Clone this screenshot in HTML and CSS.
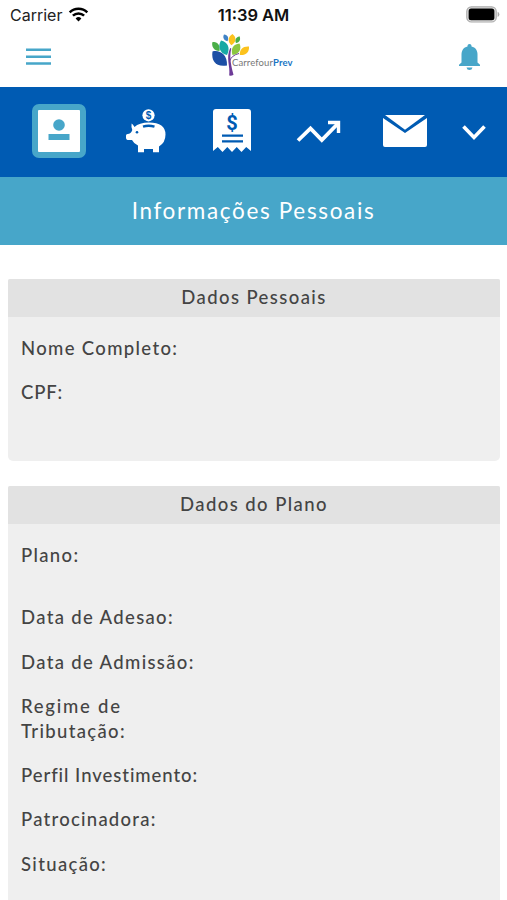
FILE: index.html
```html
<!DOCTYPE html>
<html lang="pt-BR">
<head>
<meta charset="utf-8">
<title>Informações Pessoais</title>
<link rel="stylesheet" href="styles.css">
</head>
<body>
<div class="status">
  <div class="carrier"><span>Carrier</span>
    <svg width="21" height="15" viewBox="0 0 21 15"><path d="M10.5 14.5 7.6 11.4a4.1 4.1 0 0 1 5.8 0z"/><path d="M4.9 8.7a8 8 0 0 1 11.2 0M1.7 5.3a12.8 12.8 0 0 1 17.6 0" fill="none" stroke="#000" stroke-width="2.5"/></svg>
  </div>
  <div class="time">11:39 AM</div>
  <svg class="battery" width="34" height="17" viewBox="0 0 34 17"><rect x=".8" y=".8" width="29.4" height="15.2" rx="4.6" fill="#e4e4e4" stroke="#aaa" stroke-width="1.2"/><rect x="2.6" y="2.6" width="25.8" height="11.6" rx="2.5" fill="#000"/><path d="M31.6 5.8q1.8.9 1.8 2.6t-1.8 2.6z" fill="#aaa"/></svg>
</div>
<header class="appbar">
  <svg class="menu" width="25" height="18" viewBox="0 0 25 18"><path d="M0 1.8h25M0 8.8h25M0 15.5h25" stroke="#47a6c9" stroke-width="2.6"/></svg>
  <div class="logo">
    <svg width="40" height="43" viewBox="0 0 40 43">
      <path d="M17.200 41.500C18.500 32 13.500 24 18.200 14L19.300 14.500C17 24 19.500 33 21.500 40.800q-2 1.200-4.300.7z" fill="#6d3a97"/>
      <path d="M17.500 27Q20 21 27 19.500" fill="none" stroke="#6d3a97" stroke-width="1"/>
      <path d="M.5 17.500C7 15.500 15.500 20 15 31.500 4 33.500-1 27 .5 17.500z" fill="#1c4fa5"/>
      <path d="M.3 8.300C5 7 8.500 11 7.500 17 2 17-.5 13 .3 8.300z" fill="#4aae48"/>
      <path d="M9 6.500C16 8 18.500 14 15 21 7.500 19.500 5.500 12 9 6.500z" fill="#16a9a4"/>
      <path d="M12 .5C16 1 17 4 15.500 7.200 11.500 6.500 10.500 3 12 .5z" fill="#3f82c6"/>
      <path d="M20.500 0C25 3.500 24 8.500 19.500 11.200 15.500 8 15.500 3 20.500 0z" fill="#fcc21d"/>
      <path d="M27.500 2.200C29 5.500 27.500 8.500 24 9 22.500 6 24 3 27.500 2.200z" fill="#4aae48"/>
      <path d="M27.500 9.500C30 15 27 20.500 20.500 21 18.500 15 21 10 27.500 9.500z" fill="#8bc63f"/>
      <path d="M37 12.500C37.500 18 34 21.500 27.800 21 27.500 15.500 31 12 37 12.500z" fill="#fcc21d"/>
    </svg>
    <div class="brand">Carrefour<b>Prev</b></div>
  </div>
  <svg class="bell" width="21" height="27" viewBox="0 0 21 27"><path d="M10.500 0c1.200 0 2 .9 2 2v.4c4 .9 6 4 6 8v8l2.500 2.400V22H0v-1.200l2.500-2.400v-8c0-4 2-7.100 6-8V2c0-1.100.8-2 2-2zM7.500 23.500h6q-.5 2.500-3 2.500t-3-2.500z" fill="#47a6c9"/></svg>
</header>
<nav class="tabs">
  <div class="profile"><svg width="44" height="42" viewBox="0 0 44 42"><circle cx="22" cy="15" r="5.800" fill="#47a6c9"/><path d="M11.500 24H32.500v6H11.500z" fill="#47a6c9"/></svg></div>
  <svg class="pig" width="40" height="44" viewBox="0 0 40 44"><circle cx="22.500" cy="6.300" r="6.100" fill="#fff"/><text x="22.500" y="9.900" class="coin">$</text><path d="M8.500 18Q7 15 5.600 14.500q-.6 3 .7 6.500Q5 25 1.500 25 0 25 0 26.500v2.500q0 1.500 1.500 2h4.500q2 4 6 5.500v6.700h6V40h9v3.200h6V37.500q6.500-4 6.500-12Q39.500 13.500 23 13.500 13 13.500 8.500 18z" fill="#fff"/><path d="M17 17.700Q22.500 15.800 28.500 17.700" fill="none" stroke="#005bb3" stroke-width="2.400"/><circle cx="11" cy="23.300" r="1.300" fill="#005bb3"/></svg>
  <svg class="receipt" width="38" height="44" viewBox="0 0 38 44"><path d="M3 0h32q3 0 3 3v39l-4.800-4-4.700 5-4.800-5-4.700 5-4.700-5-4.800 5-4.700-5L0 42V3q0-3 3-3z" fill="#fff"/><text x="19" y="20.500" class="dollar">$</text><path d="M9 26.600h21M9 32.400h21" stroke="#005bb3" stroke-width="2.300"/></svg>
  <svg class="trend" width="46" height="24" viewBox="0 0 46 24"><path d="M2 20.500 14.500 8.500 25.800 20 41.500 4" fill="none" stroke="#fff" stroke-width="3.800"/><path d="M32 2.500h10.500v10.500" fill="none" stroke="#fff" stroke-width="3.400"/></svg>
  <svg class="mail" width="44" height="32" viewBox="0 0 44 32"><path d="M2 0h40L22 14.800z" fill="#fff"/><path d="M0 3 22 18 44 3v27q0 2-2 2H2q-2 0-2-2z" fill="#fff"/></svg>
  <svg class="chevron" width="24" height="16" viewBox="0 0 24 16"><path d="M1.500 1.500 12 12.500 22.500 1.500" fill="none" stroke="#fff" stroke-width="3.600"/></svg>
</nav>
<h1 class="title">Informações Pessoais</h1>
<main>
  <section class="card first">
    <h2>Dados Pessoais</h2>
    <div class="fields">
      <p>Nome Completo:</p>
      <p class="cpf">CPF:</p>
    </div>
  </section>
  <section class="card second">
    <h2>Dados do Plano</h2>
    <div class="fields">
      <p class="plan">Plano:</p>
      <p>Data de Adesao:</p>
      <p>Data de Admissão:</p>
      <p><span class="wide">Regime de</span><br>Tributação:</p>
      <p class="invest">Perfil Investimento:</p>
      <p class="sponsor">Patrocinadora:</p>
      <p>Situação:</p>
    </div>
  </section>
</main>
</body>
</html>
```
FILE: styles.css
```css
* { box-sizing: border-box; }
body { margin: 0; height: 900px; overflow: hidden; background: #fff; color: #444; font-family: Lato, sans-serif; font-weight: 500; }
svg { display: block; flex: none; overflow: visible; }
.status { height: 30px; display: grid; grid-template-columns: 1fr auto 1fr; align-items: center; padding: 0 7px 0 10px; font: 400 16px/30px Inter, sans-serif; color: #222; }
.carrier { display: flex; align-items: center; gap: 6px; }
.carrier svg { margin-top: -2px; }
.time { font-weight: 600; font-size: 16.5px; color: #111; margin-left: -3px; }
.battery { justify-self: end; margin-top: -2px; }
.appbar { height: 57px; display: flex; justify-content: space-between; align-items: flex-start; padding: 0 27px 0 26px; }
.menu { margin-top: 18px; }
.logo { display: flex; margin: 4px 4px 0 0; width: 82px; }
.brand { margin: 22px 0 0 -20px; font: 400 9.500px/14px Lato, sans-serif; letter-spacing: .1px; color: #777; white-space: nowrap; }
.brand b { color: #1976c5; }
.bell { margin-top: 14px; }
.tabs { height: 90px; background: #005bb3; display: flex; align-items: flex-start; padding-left: 32px; }
.profile { width: 54px; height: 54px; margin-top: 17px; border: 6px solid #47a6c9; border-radius: 7px; background: #fff; display: flex; align-items: center; justify-content: center; }
.pig { margin: 22px 0 0 40px; }
.receipt { margin: 22px 0 0 47px; }
.trend { margin: 33px 0 0 45px; }
.mail { margin: 28px 0 0 41px; }
.chevron { margin: 38px 0 0 35px; }
.coin { font: 700 10px "Liberation Sans", sans-serif; text-anchor: middle; fill: #005bb3; }
.dollar { font: 700 20px Roboto, sans-serif; text-anchor: middle; fill: #005bb3; }
.title { margin: 0; height: 68px; background: #47a6c9; color: #fff; text-align: center; font-size: 22.5px; font-weight: 400; line-height: 67px; letter-spacing: 1.65px; }
main { padding: 34px 7px 0 8px; }
.card { background: #efefef; border-radius: 2px 2px 5px 5px; overflow: hidden; }
.first { height: 182px; margin-bottom: 25px; }
.second { height: 440px; }
h2 { margin: 0; height: 38px; background: #e2e2e2; text-align: center; font-size: 18.5px; font-weight: 500; line-height: 36px; letter-spacing: 1.42px; }
.fields { padding: 19px 13px 0; display: flex; flex-direction: column; gap: 20px; }
p { margin: 0; font-size: 18.5px; line-height: 24.4px; letter-spacing: 1.34px; }
.cpf { letter-spacing: .9px; }
.plan { margin-bottom: 18px; }
.wide { letter-spacing: 1.75px; }
.invest { letter-spacing: .95px; }
.sponsor { letter-spacing: 1.25px; }
```
